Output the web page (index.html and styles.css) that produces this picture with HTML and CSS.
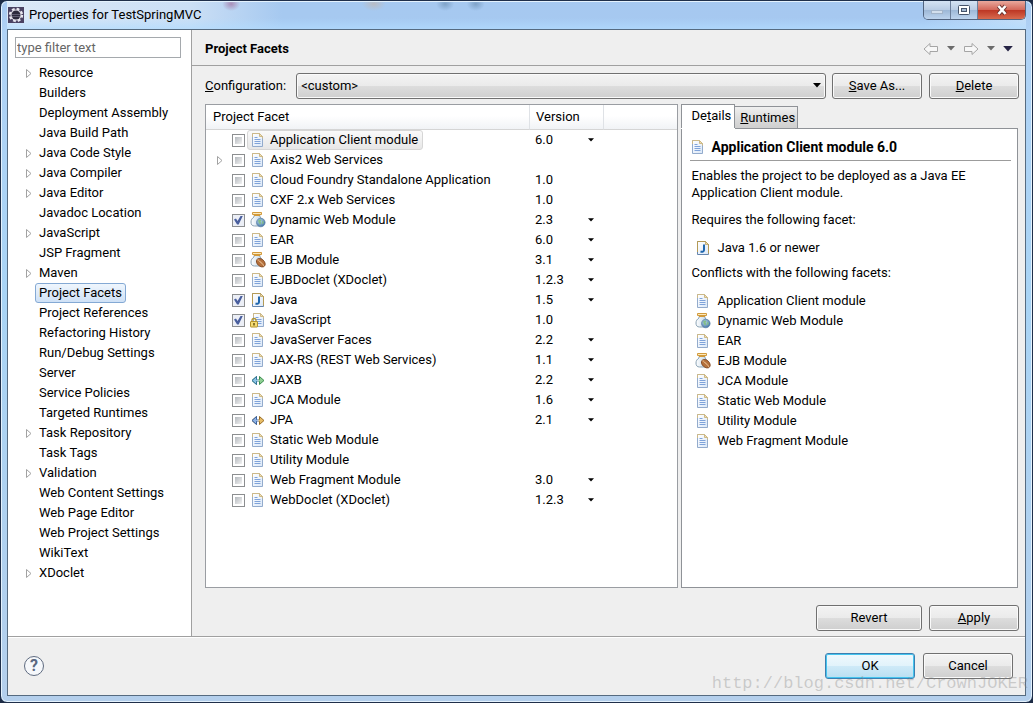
FILE: index.html
```html
<!DOCTYPE html>
<html lang="en">
<head>
<meta charset="utf-8">
<title>Properties for TestSpringMVC</title>
<link rel="stylesheet" href="styles.css">
</head>
<body>
<svg class="defs" aria-hidden="true">
  <defs>
    <linearGradient id="paper" x1="0" y1="0" x2="1" y2="1"><stop offset="0" stop-color="#fff"/><stop offset="1" stop-color="#dbe8f8"/></linearGradient>
    <linearGradient id="glass" x1="0" y1="0" x2="1" y2="0"><stop offset="0" stop-color="#fff"/><stop offset="1" stop-color="#bcd3e6"/></linearGradient>
    <radialGradient id="globe" cx=".4" cy=".35" r=".7"><stop offset="0" stop-color="#b9d9ea"/><stop offset="1" stop-color="#3d6ea3"/></radialGradient>
    <symbol id="doc" viewBox="0 0 16 16">
      <path d="M2.500 1.500h7l3 3v10h-10z" fill="url(#paper)" stroke="#93abcc"/>
      <path d="M2.500 5v-3.500h7l3 3v2" fill="none" stroke="#cdb988"/>
      <path d="M9.500 1.500v3h3z" fill="#f2dfae" stroke="#cdb988"/>
      <path d="M4.500 5.500h3M4.500 7.500h6M4.500 9.500h6M4.500 11.500h6" stroke="#7fa3da"/>
    </symbol>
    <symbol id="jar" viewBox="0 0 16 16">
      <path d="M4 3.500h6v1.500c1.500 1.200 2 2.500 2 4.500 0 3-1 4.500-3 4.500h-4.500c-2.500 0-3.500-1.500-3.500-4 0-2.200 1-3.700 3-5z" fill="url(#glass)" stroke="#8ba3b5"/>
      <path d="M2.500 .5h9v2h-9zM4 3.500h6" fill="#fbe9bd" stroke="#d29a3c"/>
    </symbol>
    <symbol id="web" viewBox="0 0 16 16">
      <use href="#jar"/>
      <circle cx="10.800" cy="10.500" r="4.300" fill="url(#globe)" stroke="#5a7fa6" stroke-width=".7"/>
      <path d="M8 8.500l2-1.300 1.500 1-1 1.500.8 1.300-1.300 1.700-1.200-2z M12 9l1.700.5-.3 2-1.200 1z" fill="#83bd8a"/>
    </symbol>
    <symbol id="ejb" viewBox="0 0 16 16">
      <use href="#jar"/>
      <ellipse cx="10.800" cy="10.700" rx="5" ry="3.500" transform="rotate(42 10.800 10.700)" fill="#b5713d" stroke="#7b421c" stroke-width=".8"/>
      <path d="M7.500 7.800c2 .3 2 2 3.500 2.800s2 2 2.800 3.200" fill="none" stroke="#f0cba0"/>
    </symbol>
    <symbol id="java" viewBox="0 0 16 16">
      <path d="M2.500 1.500h8l3 3v10h-11z" fill="url(#paper)" stroke="#6485ae"/>
      <path d="M2.500 12v-10.500h8l3 3v9" fill="none" stroke="#b49a55"/>
      <path d="M10.500 1.500v3h3z" fill="#f0dca8" stroke="#b49a55" stroke-width=".7"/>
      <path d="M9 4.500v5.500c0 1.600-1.500 2.100-3.500 1.500" fill="none" stroke="#1f66ad" stroke-width="2"/>
    </symbol>
    <symbol id="lock" viewBox="0 0 16 16">
      <use href="#doc" x="1"/>
      <path d="M2 10v-1.500a2 2 0 0 1 4 0v1.500" fill="none" stroke="#b3952f" stroke-width="1.300"/>
      <rect x=".5" y="9.500" width="7" height="5.500" rx=".5" fill="#f4db74" stroke="#b3922c"/>
      <path d="M4 11v2.500" stroke="#5f4a09" stroke-width="1.400"/>
    </symbol>
    <symbol id="jaxb" viewBox="0 0 16 16">
      <path d="M6.500 4.500v3h3v-3l4.500 4-4.500 4v-3h-3v3l-4.500-4z" fill="#8fd093" stroke="#388c4e"/>
      <path d="M6.500 4.500v3h1.500v2h-1.500v3l-4.500-4z" fill="#8cc3e3" stroke="#35749d"/>
      <path d="M8 6.500v4" stroke="#fff"/>
    </symbol>
    <symbol id="jpa" viewBox="0 0 16 16">
      <path d="M6.500 4.500v3h3v-3l4.500 4-4.500 4v-3h-3v3l-4.500-4z" fill="#e8bd66" stroke="#9a6d25"/>
      <path d="M6.500 4.500v3h1.500v2h-1.500v3l-4.500-4z" fill="#8fb2e3" stroke="#3a65a5"/>
      <path d="M8 6.500v4" stroke="#fff"/>
    </symbol>
    <symbol id="twist" viewBox="0 0 8 10"><path d="M1.500 1.500l4.500 4-4.500 4z" fill="#fff" stroke="#a2a2a2"/></symbol>
    <symbol id="down" viewBox="0 0 8 5"><path d="M0 0h8l-4 4.500z" fill="currentColor"/></symbol>
    <symbol id="arrow" viewBox="0 0 16 14"><path d="M1 7l6-5.500v3h7.500v5h-7.500v3z" fill="#f7f7f7" stroke="#a5a5a5"/></symbol>
  </defs>
</svg>

<div class="window">
  <header class="titlebar">
    <svg class="ico" viewBox="0 0 16 16" aria-hidden="true">
      <rect width="16" height="16" fill="#4a4262"/>
      <circle cx="8" cy="8" r="6" fill="none" stroke="#e9e7ef" stroke-width="2.400" stroke-dasharray="2.700 2"/>
      <circle cx="8" cy="8" r="5.500" fill="#e2e0e8"/>
      <circle cx="8" cy="8" r="4.500" fill="#2d2a3c"/>
      <path d="M4 7.500h8M4 9.500h8" stroke="#77748a" stroke-width=".7"/>
    </svg>
    <h1 class="window-title">Properties for TestSpringMVC</h1>
    <div class="window-buttons">
      <button class="wb" aria-label="Minimize"><svg viewBox="0 0 14 12"><rect x="1.500" y="6.500" width="11" height="3" fill="#d3dfed" stroke="#a3b4c9"/></svg></button>
      <button class="wb" aria-label="Maximize"><svg viewBox="0 0 14 12"><rect x="1.500" y="1.500" width="11" height="9" rx="1" fill="#fff" stroke="#46546b"/><rect x="4.500" y="4.500" width="5" height="3" fill="#a6bad2" stroke="#46546b"/></svg></button>
      <button class="wb close" aria-label="Close"><svg viewBox="0 0 14 12"><path d="M3.500 2l7 8M10.500 2l-7 8" stroke="#6b3430" stroke-width="4.200"/><path d="M3.500 2l7 8M10.500 2l-7 8" stroke="#fff" stroke-width="2.600"/></svg></button>
    </div>
  </header>

  <div class="client">
    <div class="panes">
      <nav class="sidebar" aria-label="Categories">
        <input class="filter" type="text" placeholder="type filter text" aria-label="Filter">
        <ul class="tree">
          <li><button class="twisty" aria-label="Expand Resource"><svg><use href="#twist"/></svg></button><a href="#">Resource</a></li>
          <li><a href="#">Builders</a></li>
          <li><a href="#">Deployment Assembly</a></li>
          <li><a href="#">Java Build Path</a></li>
          <li><button class="twisty" aria-label="Expand Java Code Style"><svg><use href="#twist"/></svg></button><a href="#">Java Code Style</a></li>
          <li><button class="twisty" aria-label="Expand Java Compiler"><svg><use href="#twist"/></svg></button><a href="#">Java Compiler</a></li>
          <li><button class="twisty" aria-label="Expand Java Editor"><svg><use href="#twist"/></svg></button><a href="#">Java Editor</a></li>
          <li><a href="#">Javadoc Location</a></li>
          <li><button class="twisty" aria-label="Expand JavaScript"><svg><use href="#twist"/></svg></button><a href="#">JavaScript</a></li>
          <li><a href="#">JSP Fragment</a></li>
          <li><button class="twisty" aria-label="Expand Maven"><svg><use href="#twist"/></svg></button><a href="#">Maven</a></li>
          <li><a class="current" href="#">Project Facets</a></li>
          <li><a href="#">Project References</a></li>
          <li><a href="#">Refactoring History</a></li>
          <li><a href="#">Run/Debug Settings</a></li>
          <li><a href="#">Server</a></li>
          <li><a href="#">Service Policies</a></li>
          <li><a href="#">Targeted Runtimes</a></li>
          <li><button class="twisty" aria-label="Expand Task Repository"><svg><use href="#twist"/></svg></button><a href="#">Task Repository</a></li>
          <li><a href="#">Task Tags</a></li>
          <li><button class="twisty" aria-label="Expand Validation"><svg><use href="#twist"/></svg></button><a href="#">Validation</a></li>
          <li><a href="#">Web Content Settings</a></li>
          <li><a href="#">Web Page Editor</a></li>
          <li><a href="#">Web Project Settings</a></li>
          <li><a href="#">WikiText</a></li>
          <li><button class="twisty" aria-label="Expand XDoclet"><svg><use href="#twist"/></svg></button><a href="#">XDoclet</a></li>
        </ul>
      </nav>

      <main class="page">
        <div class="page-head">
          <h2 class="page-title">Project Facets</h2>
          <div class="history">
            <button class="nav-btn" aria-label="Back"><svg class="arrow"><use href="#arrow"/></svg></button>
            <button class="nav-btn" aria-label="Back history"><svg class="caret"><use href="#down"/></svg></button>
            <button class="nav-btn" aria-label="Forward"><svg class="arrow forward"><use href="#arrow"/></svg></button>
            <button class="nav-btn" aria-label="Forward history"><svg class="caret"><use href="#down"/></svg></button>
            <button class="nav-btn menu" aria-label="Menu"><svg class="caret"><use href="#down"/></svg></button>
          </div>
        </div>

        <div class="page-body">
          <div class="config">
            <label for="config"><u>C</u>onfiguration:</label>
            <div class="select-box">
              <select id="config" class="btn"><option>&lt;custom&gt;</option></select>
              <svg class="caret"><use href="#down"/></svg>
            </div>
            <button class="btn"><span><u>S</u>ave As...</span></button>
            <button class="btn"><span><u>D</u>elete</span></button>
          </div>

          <div class="split">
            <div class="facets">
              <table>
                <thead><tr><th class="c-name" scope="col">Project Facet</th><th class="c-ver" scope="col">Version</th><td></td></tr></thead>
                <tbody>
                  <tr><td><div class="facet"><input type="checkbox" id="f1"><label class="selected" for="f1"><svg class="ico"><use href="#doc"/></svg>Application Client module</label></div></td><td><div class="ver">6.0<button aria-label="Choose version"><svg><use href="#down"/></svg></button></div></td><td></td></tr>
                  <tr><td><div class="facet"><button class="twisty" aria-label="Expand Axis2"><svg><use href="#twist"/></svg></button><input type="checkbox" id="f2"><label for="f2"><svg class="ico"><use href="#doc"/></svg>Axis2 Web Services</label></div></td><td></td><td></td></tr>
                  <tr><td><div class="facet"><input type="checkbox" id="f3"><label for="f3"><svg class="ico"><use href="#doc"/></svg>Cloud Foundry Standalone Application</label></div></td><td><div class="ver">1.0</div></td><td></td></tr>
                  <tr><td><div class="facet"><input type="checkbox" id="f4"><label for="f4"><svg class="ico"><use href="#doc"/></svg>CXF 2.x Web Services</label></div></td><td><div class="ver">1.0</div></td><td></td></tr>
                  <tr><td><div class="facet"><input type="checkbox" id="f5" checked><label for="f5"><svg class="ico"><use href="#web"/></svg>Dynamic Web Module</label></div></td><td><div class="ver">2.3<button aria-label="Choose version"><svg><use href="#down"/></svg></button></div></td><td></td></tr>
                  <tr><td><div class="facet"><input type="checkbox" id="f6"><label for="f6"><svg class="ico"><use href="#doc"/></svg>EAR</label></div></td><td><div class="ver">6.0<button aria-label="Choose version"><svg><use href="#down"/></svg></button></div></td><td></td></tr>
                  <tr><td><div class="facet"><input type="checkbox" id="f7"><label for="f7"><svg class="ico"><use href="#ejb"/></svg>EJB Module</label></div></td><td><div class="ver">3.1<button aria-label="Choose version"><svg><use href="#down"/></svg></button></div></td><td></td></tr>
                  <tr><td><div class="facet"><input type="checkbox" id="f8"><label for="f8"><svg class="ico"><use href="#doc"/></svg>EJBDoclet (XDoclet)</label></div></td><td><div class="ver">1.2.3<button aria-label="Choose version"><svg><use href="#down"/></svg></button></div></td><td></td></tr>
                  <tr><td><div class="facet"><input type="checkbox" id="f9" checked><label for="f9"><svg class="ico"><use href="#java"/></svg>Java</label></div></td><td><div class="ver">1.5<button aria-label="Choose version"><svg><use href="#down"/></svg></button></div></td><td></td></tr>
                  <tr><td><div class="facet"><input type="checkbox" id="f10" checked><label for="f10"><svg class="ico"><use href="#lock"/></svg>JavaScript</label></div></td><td><div class="ver">1.0</div></td><td></td></tr>
                  <tr><td><div class="facet"><input type="checkbox" id="f11"><label for="f11"><svg class="ico"><use href="#doc"/></svg>JavaServer Faces</label></div></td><td><div class="ver">2.2<button aria-label="Choose version"><svg><use href="#down"/></svg></button></div></td><td></td></tr>
                  <tr><td><div class="facet"><input type="checkbox" id="f12"><label for="f12"><svg class="ico"><use href="#doc"/></svg>JAX-RS (REST Web Services)</label></div></td><td><div class="ver">1.1<button aria-label="Choose version"><svg><use href="#down"/></svg></button></div></td><td></td></tr>
                  <tr><td><div class="facet"><input type="checkbox" id="f13"><label for="f13"><svg class="ico"><use href="#jaxb"/></svg>JAXB</label></div></td><td><div class="ver">2.2<button aria-label="Choose version"><svg><use href="#down"/></svg></button></div></td><td></td></tr>
                  <tr><td><div class="facet"><input type="checkbox" id="f14"><label for="f14"><svg class="ico"><use href="#doc"/></svg>JCA Module</label></div></td><td><div class="ver">1.6<button aria-label="Choose version"><svg><use href="#down"/></svg></button></div></td><td></td></tr>
                  <tr><td><div class="facet"><input type="checkbox" id="f15"><label for="f15"><svg class="ico"><use href="#jpa"/></svg>JPA</label></div></td><td><div class="ver">2.1<button aria-label="Choose version"><svg><use href="#down"/></svg></button></div></td><td></td></tr>
                  <tr><td><div class="facet"><input type="checkbox" id="f16"><label for="f16"><svg class="ico"><use href="#doc"/></svg>Static Web Module</label></div></td><td></td><td></td></tr>
                  <tr><td><div class="facet"><input type="checkbox" id="f17"><label for="f17"><svg class="ico"><use href="#doc"/></svg>Utility Module</label></div></td><td></td><td></td></tr>
                  <tr><td><div class="facet"><input type="checkbox" id="f18"><label for="f18"><svg class="ico"><use href="#doc"/></svg>Web Fragment Module</label></div></td><td><div class="ver">3.0<button aria-label="Choose version"><svg><use href="#down"/></svg></button></div></td><td></td></tr>
                  <tr><td><div class="facet"><input type="checkbox" id="f19"><label for="f19"><svg class="ico"><use href="#doc"/></svg>WebDoclet (XDoclet)</label></div></td><td><div class="ver">1.2.3<button aria-label="Choose version"><svg><use href="#down"/></svg></button></div></td><td></td></tr>
                </tbody>
              </table>
            </div>

            <section class="info">
              <div class="tabs" role="tablist">
                <button class="tab active" role="tab" aria-selected="true">De<u>t</u>ails</button>
                <button class="tab" role="tab" aria-selected="false"><u>R</u>untimes</button>
              </div>
              <div class="tab-body" role="tabpanel">
                <h3 class="facet-title"><svg class="ico"><use href="#doc"/></svg>Application Client module 6.0</h3>
                <p>Enables the project to be deployed as a Java EE Application Client module.</p>
                <p>Requires the following facet:</p>
                <ul class="facet-list"><li><svg class="ico"><use href="#java"/></svg>Java 1.6 or newer</li></ul>
                <p>Conflicts with the following facets:</p>
                <ul class="facet-list">
                  <li><svg class="ico"><use href="#doc"/></svg>Application Client module</li>
                  <li><svg class="ico"><use href="#web"/></svg>Dynamic Web Module</li>
                  <li><svg class="ico"><use href="#doc"/></svg>EAR</li>
                  <li><svg class="ico"><use href="#ejb"/></svg>EJB Module</li>
                  <li><svg class="ico"><use href="#doc"/></svg>JCA Module</li>
                  <li><svg class="ico"><use href="#doc"/></svg>Static Web Module</li>
                  <li><svg class="ico"><use href="#doc"/></svg>Utility Module</li>
                  <li><svg class="ico"><use href="#doc"/></svg>Web Fragment Module</li>
                </ul>
              </div>
            </section>
          </div>

          <div class="actions">
            <button class="btn wide">Revert</button>
            <button class="btn"><span><u>A</u>pply</span></button>
          </div>
        </div>
      </main>
    </div>

    <footer class="footer">
      <button class="help" aria-label="Help">?</button>
      <div class="footer-buttons">
        <button class="btn primary">OK</button>
        <button class="btn">Cancel</button>
      </div>
    </footer>
  </div>
  <div class="watermark">http://blog.csdn.net/CrownJOKER</div>
</div>
</body>
</html>
```
FILE: styles.css
```css
* { box-sizing: border-box; }

body {
  margin: 0;
  background: #1d2b45;
  color: #000;
  font: 13px/18px Roboto, "Noto Sans", sans-serif;
}

button, input, select { font: inherit; color: inherit; margin: 0; }
button { padding: 0; border: 0; background: none; }
h1, h2, h3, p, ul { margin: 0; padding: 0; }
ul { list-style: none; }
a { color: inherit; text-decoration: none; }
svg { display: block; flex: none; }
.defs { position: absolute; width: 0; height: 0; }
.ico { width: 16px; height: 16px; }

/* window frame */
.window {
  position: relative;
  display: flex;
  flex-direction: column;
  min-height: 100vh;
  padding: 0 6px 6px;
  border: 1px solid #1f2f4a;
  border-radius: 7px;
  background: linear-gradient(#a6c8f0, #b0d2f5 30px, #a9d4f5 300px, #b4cfec);
  box-shadow: inset 0 0 0 1px #e4f2fd;
}

.titlebar {
  display: flex;
  align-items: center;
  gap: 5px;
  height: 28px;
  padding-left: 1px;
  background:
    radial-gradient(ellipse 9px 7px at 43% 3px, #7fa3c8, transparent),
    radial-gradient(ellipse 9px 7px at 46% 3px, #7fa3c8, transparent),
    radial-gradient(ellipse 12px 7px at 36% 3px, #b9bcc4, transparent),
    radial-gradient(ellipse 9px 7px at 22% 3px, #a98fb8, transparent),
    linear-gradient(transparent 60%, rgba(178, 220, 255, .7)),
    linear-gradient(90deg, #dce9f7, #cbdff5 18%, #a6c9f0 27%, #a6c8f0 90%, #c6def7);
  box-shadow: inset 0 1px #e4f2fd;
}
.window-title { font-size: 13px; font-weight: 400; }
.window-buttons {
  display: flex;
  align-self: flex-start;
  margin-left: auto;
  border: 1px solid #52647f;
  border-top: 0;
  border-radius: 0 0 5px 5px;
  overflow: hidden;
}
.wb {
  display: flex;
  align-items: center;
  justify-content: center;
  width: 27px;
  height: 18px;
  border-right: 1px solid #6c7f9b;
  background: linear-gradient(#d4e2f3, #b9cce4 48%, #9db7d6 50%, #bdd4ee);
}
.wb svg { width: 14px; height: 12px; }
.wb.close {
  width: 47px;
  border: 0;
  background: linear-gradient(#e9a99d, #d4685a 48%, #bc3523 50%, #d86a4e);
}

.client {
  display: flex;
  flex: 1;
  flex-direction: column;
  border: 1px solid #566b80;
  background: #efefef;
}
.panes { display: flex; flex: 1; }

/* category tree */
.sidebar {
  flex: none;
  width: 184px;
  padding: 7px 10px 7px 7px;
  border-right: 1px solid #a0a0a0;
  background: #fff;
}
.filter {
  display: block;
  width: 100%;
  height: 21px;
  padding: 0 1px;
  border: 1px solid #a5a9ad;
  border-radius: 0;
}
.filter::placeholder { color: #666; opacity: 1; }
.tree { padding-top: 5px; }
.tree li {
  display: grid;
  grid-template-columns: 20px auto;
  justify-content: start;
  height: 20px;
}
.tree a {
  grid-column: 2;
  padding: 0 3px;
  border: 1px solid transparent;
  border-radius: 3px;
  white-space: nowrap;
}
.tree .current { border-color: #84a9d4; background: linear-gradient(#eff6fd, #cfe1f6); }
.twisty { display: flex; align-items: center; }
.twisty svg { width: 8px; height: 10px; }
.tree .twisty { padding-left: 10px; }

/* page */
.page { display: flex; flex: 1; flex-direction: column; min-width: 0; }
.page-head {
  display: flex;
  align-items: center;
  justify-content: space-between;
  height: 36px;
  padding: 2px 12px 0 13px;
  border-bottom: 1px solid #a0a0a0;
}
.page-title { font-size: 13px; font-weight: 700; }
.history { display: flex; align-items: center; gap: 8px; color: #6b6b6b; }
.arrow { width: 16px; height: 14px; }
.forward { transform: scaleX(-1); }
.caret { width: 8px; height: 5px; }
.menu { color: #262445; }
.menu .caret { width: 10px; height: 6px; }

.page-body {
  display: flex;
  flex: 1;
  flex-direction: column;
  padding: 7px 6px 5px 13px;
}
.config { display: flex; align-items: center; gap: 6px; }
.config label { margin-right: 4px; }
.config .btn + .btn { margin-left: 1px; }
.select-box { position: relative; flex: 1; }
.select-box .caret { position: absolute; right: 5px; top: 10px; pointer-events: none; }
.btn {
  width: 90px;
  height: 26px;
  border: 1px solid #707070;
  border-radius: 3px;
  background: linear-gradient(#f3f3f3, #ebebeb 48%, #dddddd 50%, #cfcfcf);
  box-shadow: inset 0 0 0 1px #fafafa;
}
select.btn { display: block; width: 100%; padding: 0 4px; appearance: none; }
.btn.wide { width: 106px; }
.btn.primary {
  border-color: #3c7fb1;
  background: linear-gradient(#f0f9fd, #e2f3fb 48%, #cfeaf8 50%, #b9dff2);
  box-shadow: inset 0 0 0 1px #45c4ee;
}

.split {
  display: grid;
  flex: 1;
  grid-template-columns: 7fr 5fr;
  gap: 3px;
  margin: 5px 1px 17px 0;
}
.facets { border: 1px solid #9a9da2; background: #fff; }
table { width: 100%; border-spacing: 0; table-layout: fixed; }
th, td { padding: 0; }
thead th, thead td {
  height: 25px;
  border-right: 1px solid #dfe2e6;
  border-bottom: 1px solid #d5d5d5;
  background: linear-gradient(#fff 45%, #f1f3f6);
  font-weight: 400;
  text-align: left;
}
thead td { border-right: 0; }
.c-name { width: 324px; padding-left: 7px; }
.c-ver { width: 74px; padding-left: 6px; }
.facet {
  display: grid;
  grid-template-columns: 16px 13px auto;
  align-items: center;
  justify-content: start;
  height: 20px;
  padding-left: 10px;
}
.facet input {
  display: grid;
  grid-column: 2;
  place-items: center;
  width: 13px;
  height: 13px;
  appearance: none;
  border: 1px solid #8c8e90;
  background: linear-gradient(135deg, #b4b9be, #f2f2f2) content-box #f2f2f2;
  padding: 2px;
}
.facet input:checked { background: #eceff6; padding: 0; }
.facet input:checked::after {
  content: "";
  width: 9px;
  height: 9px;
  background: #4a5f9e;
  clip-path: polygon(0 44%, 22% 34%, 40% 60%, 76% 0, 100% 0, 52% 100%, 34% 100%);
}
.facet label {
  display: flex;
  grid-column: 3;
  align-items: center;
  gap: 4px;
  height: 20px;
  margin-left: 2px;
  padding: 0 4px 0 2px;
  border: 1px solid transparent;
  border-radius: 3px;
}
.facet .selected { border-color: #d6d6d6; background: linear-gradient(#fafafa, #e7e7e7); }
.ver {
  display: grid;
  grid-template-columns: 53px 6px;
  align-items: center;
  height: 20px;
  padding-left: 5px;
}
.ver svg { width: 6px; height: 4px; }

/* details */
.info { display: flex; flex-direction: column; }
.tabs { display: flex; align-items: flex-end; height: 24px; }
.tab {
  height: 22px;
  padding: 0 2px 0 5px;
  border: 1px solid #8f9297;
  border-bottom: 0;
  border-left: 0;
  background: linear-gradient(#f0f0f0, #dedede 48%, #cfcfcf);
}
.tab.active {
  position: relative;
  height: 24px;
  padding: 0 3px 2px 10px;
  border-left: 1px solid #8f9297;
  background: #fff;
  box-shadow: 0 1px #fff;
}
.tab-body {
  flex: 1;
  padding: 5px 6px 7px 8px;
  border: 1px solid #8f9297;
  background: #fff;
}
.facet-title {
  display: flex;
  align-items: center;
  gap: 6px;
  height: 27px;
  border-bottom: 1px solid #9c9c9c;
  font-size: 14px;
  font-weight: 700;
}
.tab-body p { padding: 0 2px; line-height: 17px; margin: 6px 0 10px; }
.facet-list { padding-left: 5px; }
.facet-list li { display: flex; align-items: center; gap: 7px; height: 20px; }

.actions { display: flex; justify-content: flex-end; gap: 7px; }

/* footer */
.footer {
  display: flex;
  align-items: center;
  justify-content: space-between;
  height: 59px;
  padding: 0 12px 0 16px;
  border-top: 1px solid #a0a0a0;
  box-shadow: inset 0 1px #fff;
}
.help {
  width: 20px;
  height: 20px;
  border: 1px solid #5f6b80;
  border-radius: 50%;
  background: #f6f8fb;
  color: #5b6880;
  font-size: 16px;
  font-weight: 700;
  line-height: 18px;
}
.footer-buttons { display: flex; gap: 8px; }

.watermark {
  position: absolute;
  right: 4px;
  bottom: 8px;
  color: rgba(130, 130, 130, .35);
  font: 17px/20px "Liberation Mono", monospace;
  pointer-events: none;
}
```
